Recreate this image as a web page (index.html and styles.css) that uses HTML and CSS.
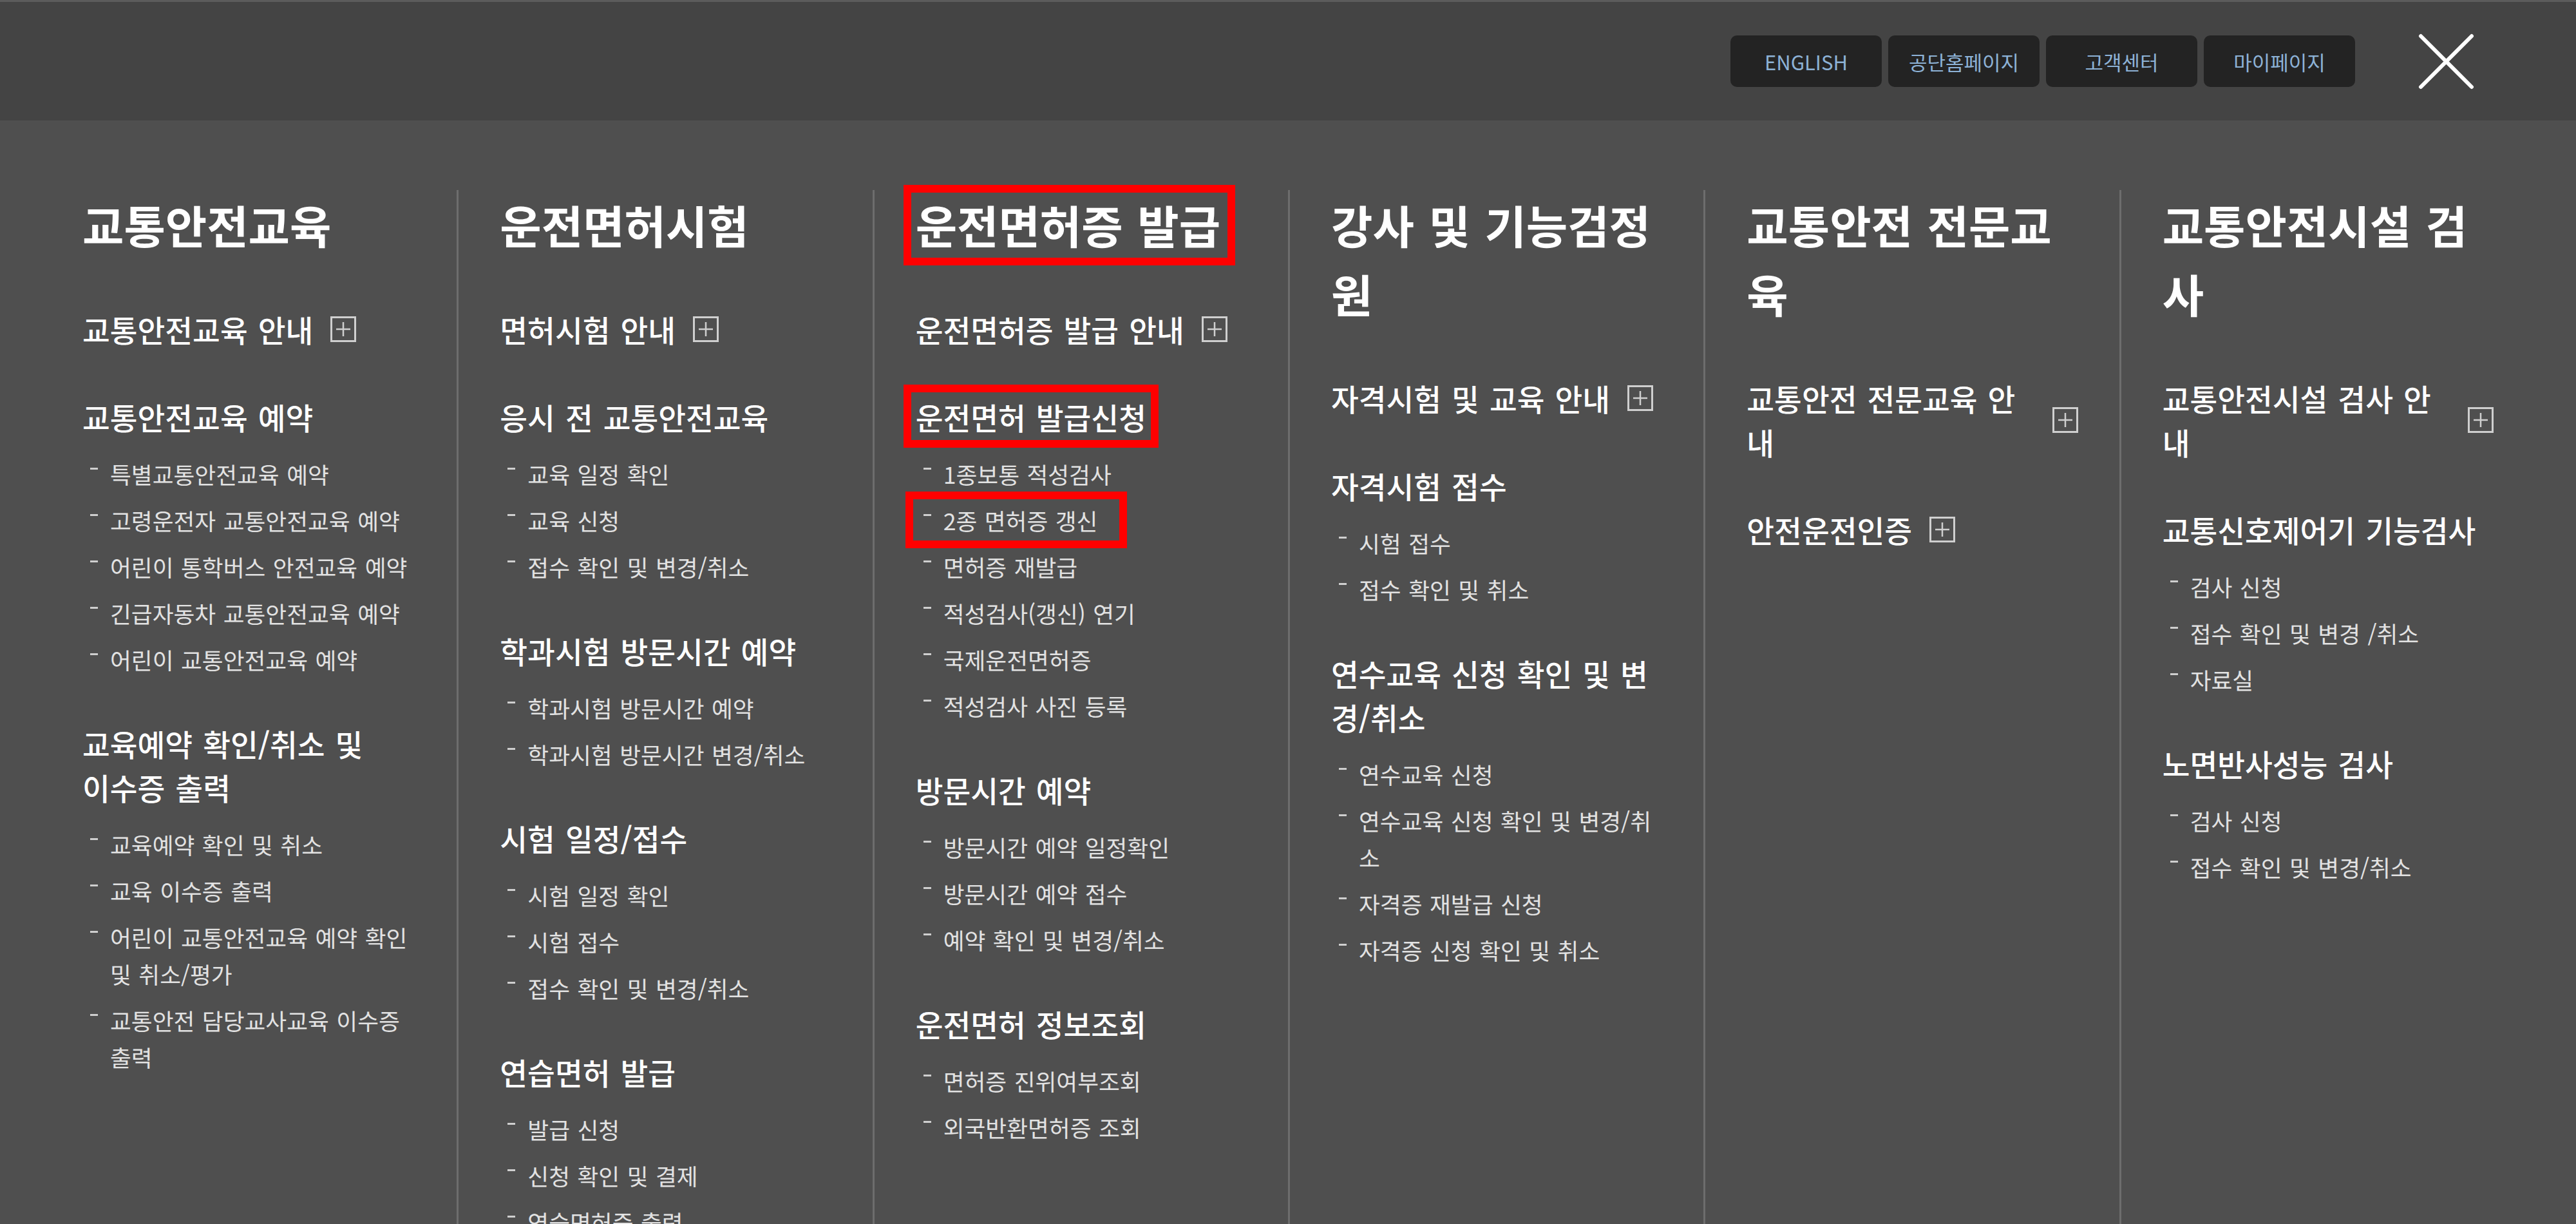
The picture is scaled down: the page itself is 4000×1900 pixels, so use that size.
FILE: index.html
```html
<!DOCTYPE html>
<html lang="ko">
<head>
    <meta charset="UTF-8">
    <meta name="viewport" content="width=device-width, initial-scale=1.0">
    <title>전체메뉴</title>
    <link rel="stylesheet" href="styles.css">
</head>
<body>
    <header class="top">
        <nav class="util">
            <a href="#" class="util-btn">ENGLISH</a>
            <a href="#" class="util-btn">공단홈페이지</a>
            <a href="#" class="util-btn">고객센터</a>
            <a href="#" class="util-btn">마이페이지</a>
        </nav>
        <button class="close" type="button" aria-label="닫기">
            <svg width="87" height="87" viewBox="0 0 87 87">
                <path d="M4 4 L83 83 M83 4 L4 83" stroke="#fff" stroke-width="6" stroke-linecap="round" fill="none"/>
            </svg>
        </button>
    </header>

    <main class="sitemap">
        <!-- 교통안전교육 -->
        <div class="col">
            <h2 class="col-title">교통안전교육</h2>
            <div class="group">
                <h3 class="group-title"><span>교통안전교육 안내</span><svg class="plus" viewBox="0 0 40 40"><rect x="1.5" y="1.5" width="37" height="37"/><path d="M20 9 V31 M9 20 H31"/></svg></h3>
            </div>
            <div class="group">
                <h3 class="group-title"><span>교통안전교육 예약</span></h3>
                <ul class="sub">
                    <li>특별교통안전교육 예약</li>
                    <li>고령운전자 교통안전교육 예약</li>
                    <li>어린이 통학버스 안전교육 예약</li>
                    <li>긴급자동차 교통안전교육 예약</li>
                    <li>어린이 교통안전교육 예약</li>
                </ul>
            </div>
            <div class="group">
                <h3 class="group-title"><span>교육예약 확인/취소 및<br>이수증 출력</span></h3>
                <ul class="sub">
                    <li>교육예약 확인 및 취소</li>
                    <li>교육 이수증 출력</li>
                    <li>어린이 교통안전교육 예약 확인 및 취소/평가</li>
                    <li>교통안전 담당교사교육 이수증 출력</li>
                </ul>
            </div>
        </div>

        <!-- 운전면허시험 -->
        <div class="col">
            <h2 class="col-title">운전면허시험</h2>
            <div class="group">
                <h3 class="group-title"><span>면허시험 안내</span><svg class="plus" viewBox="0 0 40 40"><rect x="1.5" y="1.5" width="37" height="37"/><path d="M20 9 V31 M9 20 H31"/></svg></h3>
            </div>
            <div class="group">
                <h3 class="group-title"><span>응시 전 교통안전교육</span></h3>
                <ul class="sub">
                    <li>교육 일정 확인</li>
                    <li>교육 신청</li>
                    <li>접수 확인 및 변경/취소</li>
                </ul>
            </div>
            <div class="group">
                <h3 class="group-title"><span>학과시험 방문시간 예약</span></h3>
                <ul class="sub">
                    <li>학과시험 방문시간 예약</li>
                    <li>학과시험 방문시간 변경/취소</li>
                </ul>
            </div>
            <div class="group">
                <h3 class="group-title"><span>시험 일정/접수</span></h3>
                <ul class="sub">
                    <li>시험 일정 확인</li>
                    <li>시험 접수</li>
                    <li>접수 확인 및 변경/취소</li>
                </ul>
            </div>
            <div class="group">
                <h3 class="group-title"><span>연습면허 발급</span></h3>
                <ul class="sub">
                    <li>발급 신청</li>
                    <li>신청 확인 및 결제</li>
                    <li>연습면허증 출력</li>
                </ul>
            </div>
        </div>

        <!-- 운전면허증 발급 -->
        <div class="col">
            <h2 class="col-title"><span class="mark mark-title">운전면허증 발급</span></h2>
            <div class="group">
                <h3 class="group-title"><span>운전면허증 발급 안내</span><svg class="plus" viewBox="0 0 40 40"><rect x="1.5" y="1.5" width="37" height="37"/><path d="M20 9 V31 M9 20 H31"/></svg></h3>
            </div>
            <div class="group">
                <h3 class="group-title"><span class="mark mark-group">운전면허 발급신청</span></h3>
                <ul class="sub">
                    <li>1종보통 적성검사</li>
                    <li class="mark mark-item">2종 면허증 갱신</li>
                    <li>면허증 재발급</li>
                    <li>적성검사(갱신) 연기</li>
                    <li>국제운전면허증</li>
                    <li>적성검사 사진 등록</li>
                </ul>
            </div>
            <div class="group">
                <h3 class="group-title"><span>방문시간 예약</span></h3>
                <ul class="sub">
                    <li>방문시간 예약 일정확인</li>
                    <li>방문시간 예약 접수</li>
                    <li>예약 확인 및 변경/취소</li>
                </ul>
            </div>
            <div class="group">
                <h3 class="group-title"><span>운전면허 정보조회</span></h3>
                <ul class="sub">
                    <li>면허증 진위여부조회</li>
                    <li>외국반환면허증 조회</li>
                </ul>
            </div>
        </div>

        <!-- 강사 및 기능검정원 -->
        <div class="col">
            <h2 class="col-title">강사 및 기능검정원</h2>
            <div class="group">
                <h3 class="group-title"><span>자격시험 및 교육 안내</span><svg class="plus" viewBox="0 0 40 40"><rect x="1.5" y="1.5" width="37" height="37"/><path d="M20 9 V31 M9 20 H31"/></svg></h3>
            </div>
            <div class="group">
                <h3 class="group-title"><span>자격시험 접수</span></h3>
                <ul class="sub">
                    <li>시험 접수</li>
                    <li>접수 확인 및 취소</li>
                </ul>
            </div>
            <div class="group">
                <h3 class="group-title"><span>연수교육 신청 확인 및 변경/취소</span></h3>
                <ul class="sub">
                    <li>연수교육 신청</li>
                    <li>연수교육 신청 확인 및 변경/취소</li>
                    <li>자격증 재발급 신청</li>
                    <li>자격증 신청 확인 및 취소</li>
                </ul>
            </div>
        </div>

        <!-- 교통안전 전문교육 -->
        <div class="col">
            <h2 class="col-title">교통안전 전문교육</h2>
            <div class="group">
                <h3 class="group-title"><span>교통안전 전문교육 안내</span><svg class="plus" viewBox="0 0 40 40"><rect x="1.5" y="1.5" width="37" height="37"/><path d="M20 9 V31 M9 20 H31"/></svg></h3>
            </div>
            <div class="group">
                <h3 class="group-title"><span>안전운전인증</span><svg class="plus" viewBox="0 0 40 40"><rect x="1.5" y="1.5" width="37" height="37"/><path d="M20 9 V31 M9 20 H31"/></svg></h3>
            </div>
        </div>

        <!-- 교통안전시설 검사 -->
        <div class="col">
            <h2 class="col-title">교통안전시설 검사</h2>
            <div class="group">
                <h3 class="group-title"><span>교통안전시설 검사 안내</span><svg class="plus" viewBox="0 0 40 40"><rect x="1.5" y="1.5" width="37" height="37"/><path d="M20 9 V31 M9 20 H31"/></svg></h3>
            </div>
            <div class="group">
                <h3 class="group-title"><span>교통신호제어기 기능검사</span></h3>
                <ul class="sub">
                    <li>검사 신청</li>
                    <li>접수 확인 및 변경 /취소</li>
                    <li>자료실</li>
                </ul>
            </div>
            <div class="group">
                <h3 class="group-title"><span>노면반사성능 검사</span></h3>
                <ul class="sub">
                    <li>검사 신청</li>
                    <li>접수 확인 및 변경/취소</li>
                </ul>
            </div>
        </div>
    </main>
</body>
</html>
```

FILE: styles.css
```css
html, body {
    margin: 0;
    padding: 0;
}
body {
    height: 1900px;
    overflow: hidden;
    font-family: "Noto Sans CJK KR", "Noto Sans", sans-serif;
    background: #4f4f4f;
    color: #fff;
    word-spacing: 3px;
}

/* top bar */
.top {
    display: flex;
    justify-content: flex-end;
    align-items: center;
    height: 184px;
    padding-right: 158px;
    border-top: 3px solid #5c5c5c;
    background: #444;
}
.util {
    display: flex;
    gap: 10px;
    margin-right: 98px;
}
.util-btn {
    display: flex;
    align-items: center;
    justify-content: center;
    width: 235px;
    height: 80px;
    border-radius: 10px;
    background: #232323;
    color: #8db2d6;
    font-size: 31px;
    text-decoration: none;
    word-spacing: 0;
}
.close {
    display: block;
    width: 87px;
    height: 87px;
    padding: 0;
    border: none;
    background: none;
    cursor: pointer;
}
.close svg {
    display: block;
}

/* sitemap columns */
.sitemap {
    display: grid;
    grid-template-columns: repeat(6, 1fr);
    min-height: 1606px;
    padding: 108px 64px 0;
}
.col {
    padding: 0 64px;
    min-width: 0;
}
.col + .col {
    border-left: 3px solid #6d6d6d;
}
.col-title {
    margin: 0 0 75px;
    font-size: 70px;
    line-height: 107px;
    font-weight: 700;
}
.group {
    margin-bottom: 68px;
}
.group-title {
    display: flex;
    align-items: center;
    gap: 27px;
    margin: 0;
    font-size: 46.5px;
    line-height: 68px;
    font-weight: 500;
}
.plus {
    flex-shrink: 0;
    width: 40px;
    height: 40px;
    fill: none;
    stroke: #cfcfcf;
}
.plus rect {
    stroke-width: 3;
}
.plus path {
    stroke-width: 2.5;
}
.sub {
    margin: 26px 0 0;
    padding: 0;
    list-style: none;
}
.sub li {
    position: relative;
    padding-left: 43px;
    font-size: 35.7px;
    line-height: 57px;
    color: #e2e2e2;
    word-spacing: 1.5px;
}
.sub li + li {
    margin-top: 15px;
}
.sub li::before {
    content: "";
    position: absolute;
    left: 12px;
    top: 19px;
    width: 12px;
    height: 3px;
    background: #cfcfcf;
}

/* red highlight boxes */
.mark {
    position: relative;
}
.col-title .mark {
    display: inline-block;
}
.mark::after {
    content: "";
    position: absolute;
    box-sizing: border-box;
    border: 12px solid #f00;
    pointer-events: none;
}
.mark-title::after {
    left: -19px;
    top: -8px;
    width: 515px;
    height: 125px;
}
.mark-group::after {
    left: -19px;
    top: -16px;
    width: 396px;
    height: 98px;
}
.sub li.mark-item::after {
    left: -16px;
    top: -16px;
    width: 344px;
    height: 88px;
}
```
